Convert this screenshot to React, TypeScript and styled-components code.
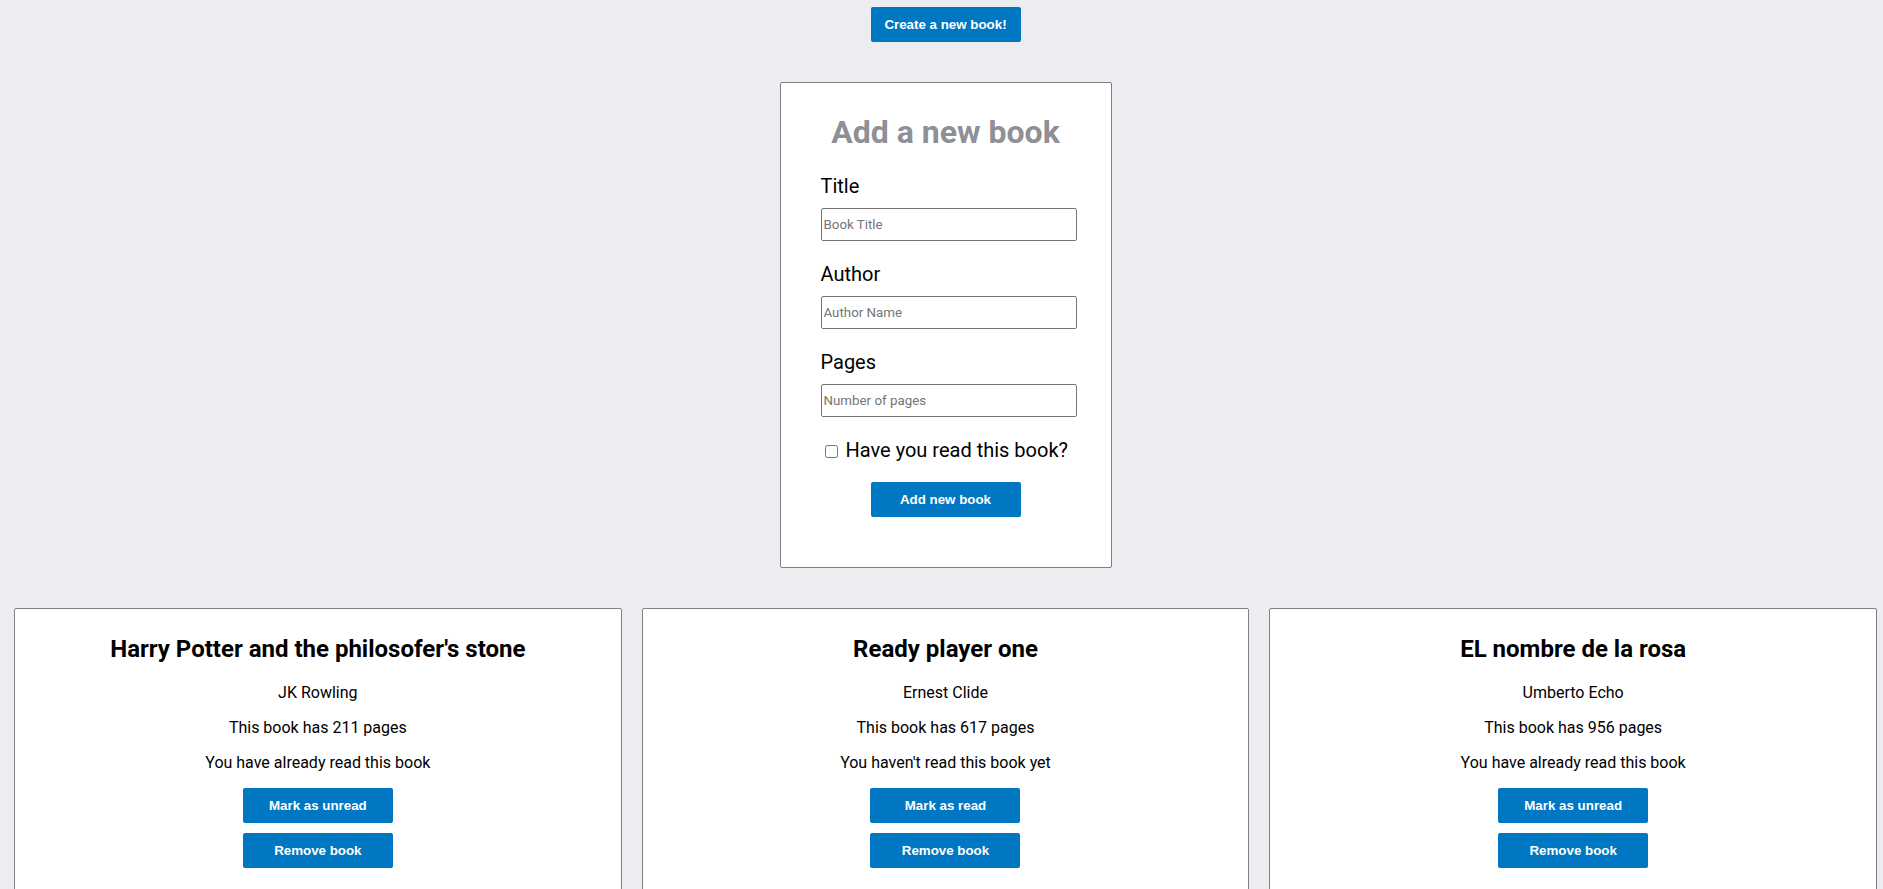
import React, { useState } from "react";
import styled, { createGlobalStyle } from "styled-components";

const GlobalStyle = createGlobalStyle`
  html, body {
    margin: 0;
    padding: 0;
    background: #ecedf1;
  }
  body {
    font-family: Roboto, "Liberation Sans", Arial, sans-serif;
    color: #000;
  }
`;

const Page = styled.div`
  display: flex;
  flex-direction: column;
  align-items: center;
  padding: 7px 6px 0 14px;
`;

const Button = styled.button`
  width: 150px;
  height: 35px;
  border: none;
  border-radius: 2px;
  background: #0077c2;
  color: #fff;
  font-family: "Liberation Sans", Arial, sans-serif;
  font-weight: 700;
  font-size: 13.333px;
  cursor: pointer;
  padding: 0;
  display: block;
`;

const FormCard = styled.form`
  margin-top: 40px;
  width: 332px;
  box-sizing: border-box;
  background: #fff;
  border: 1px solid #808080;
  border-radius: 2px;
  padding: 30px 37px 50px;
  display: flex;
  flex-direction: column;
  align-items: center;
`;

const FormTitle = styled.h1`
  margin: 0 0 23px;
  font-size: 32px;
  font-weight: 700;
  color: #8e9095;
  text-align: center;
  white-space: nowrap;
`;

const Fields = styled.div`
  align-self: stretch;
  margin: 0 -3px 0 3px;
  display: flex;
  flex-direction: column;
  gap: 21px;
`;

const Field = styled.div`
  display: flex;
  flex-direction: column;
  gap: 10px;
`;

const Label = styled.label`
  font-size: 20px;
  line-height: normal;
`;

const Input = styled.input`
  width: 256px;
  height: 33px;
  box-sizing: border-box;
  border: 1px solid #767676;
  border-radius: 2px;
  padding: 1px 2px;
  font-family: Roboto, sans-serif;
  font-size: 13.333px;
  &::placeholder {
    color: #757575;
  }
`;

const CheckRow = styled.label`
  display: flex;
  align-items: center;
  font-size: 20px;
  line-height: normal;
`;

const Checkbox = styled.input`
  width: 13px;
  height: 13px;
  margin: 3px 8px 0 4px;
`;

const SubmitButton = styled(Button)`
  margin-top: 20px;
`;

const Grid = styled.div`
  align-self: stretch;
  margin-top: 40px;
  display: grid;
  grid-template-columns: repeat(3, 1fr);
  gap: 20px;
`;

const BookCard = styled.div`
  background: #fff;
  border: 1px solid #808080;
  border-radius: 2px;
  padding: 6px 10px 30px;
  display: flex;
  flex-direction: column;
  align-items: center;
  text-align: center;
`;

const BookTitle = styled.h2`
  margin: 20px 0 20px;
  font-size: 24px;
  font-weight: 700;
  line-height: normal;
`;

const Info = styled.p`
  margin: 0 0 16px;
  font-size: 16px;
  line-height: normal;
`;

const Actions = styled.div`
  display: flex;
  flex-direction: column;
  gap: 10px;
`;

type Book = { title: string; author: string; pages: number; read: boolean };

const initialBooks: Book[] = [
  { title: "Harry Potter and the philosofer's stone", author: "JK Rowling", pages: 211, read: true },
  { title: "Ready player one", author: "Ernest Clide", pages: 617, read: false },
  { title: "EL nombre de la rosa", author: "Umberto Echo", pages: 956, read: true },
];

export default function App() {
  const [books, setBooks] = useState<Book[]>(initialBooks);

  return (
    <>
      <GlobalStyle />
      <Page>
        <Button type="button">Create a new book!</Button>
        <FormCard onSubmit={(e) => e.preventDefault()}>
          <FormTitle>Add a new book</FormTitle>
          <Fields>
            <Field>
              <Label htmlFor="title">Title</Label>
              <Input id="title" placeholder="Book Title" />
            </Field>
            <Field>
              <Label htmlFor="author">Author</Label>
              <Input id="author" placeholder="Author Name" />
            </Field>
            <Field>
              <Label htmlFor="pages">Pages</Label>
              <Input id="pages" placeholder="Number of pages" />
            </Field>
            <CheckRow>
              <Checkbox type="checkbox" />
              Have you read this book?
            </CheckRow>
          </Fields>
          <SubmitButton type="submit">Add new book</SubmitButton>
        </FormCard>
        <Grid>
          {books.map((b, i) => (
            <BookCard key={b.title}>
              <BookTitle>{b.title}</BookTitle>
              <Info>{b.author}</Info>
              <Info>This book has {b.pages} pages</Info>
              <Info>{b.read ? "You have already read this book" : "You haven't read this book yet"}</Info>
              <Actions>
                <Button
                  type="button"
                  onClick={() =>
                    setBooks((bs) => bs.map((x, j) => (j === i ? { ...x, read: !x.read } : x)))
                  }
                >
                  {b.read ? "Mark as unread" : "Mark as read"}
                </Button>
                <Button type="button" onClick={() => setBooks((bs) => bs.filter((_, j) => j !== i))}>
                  Remove book
                </Button>
              </Actions>
            </BookCard>
          ))}
        </Grid>
      </Page>
    </>
  );
}
